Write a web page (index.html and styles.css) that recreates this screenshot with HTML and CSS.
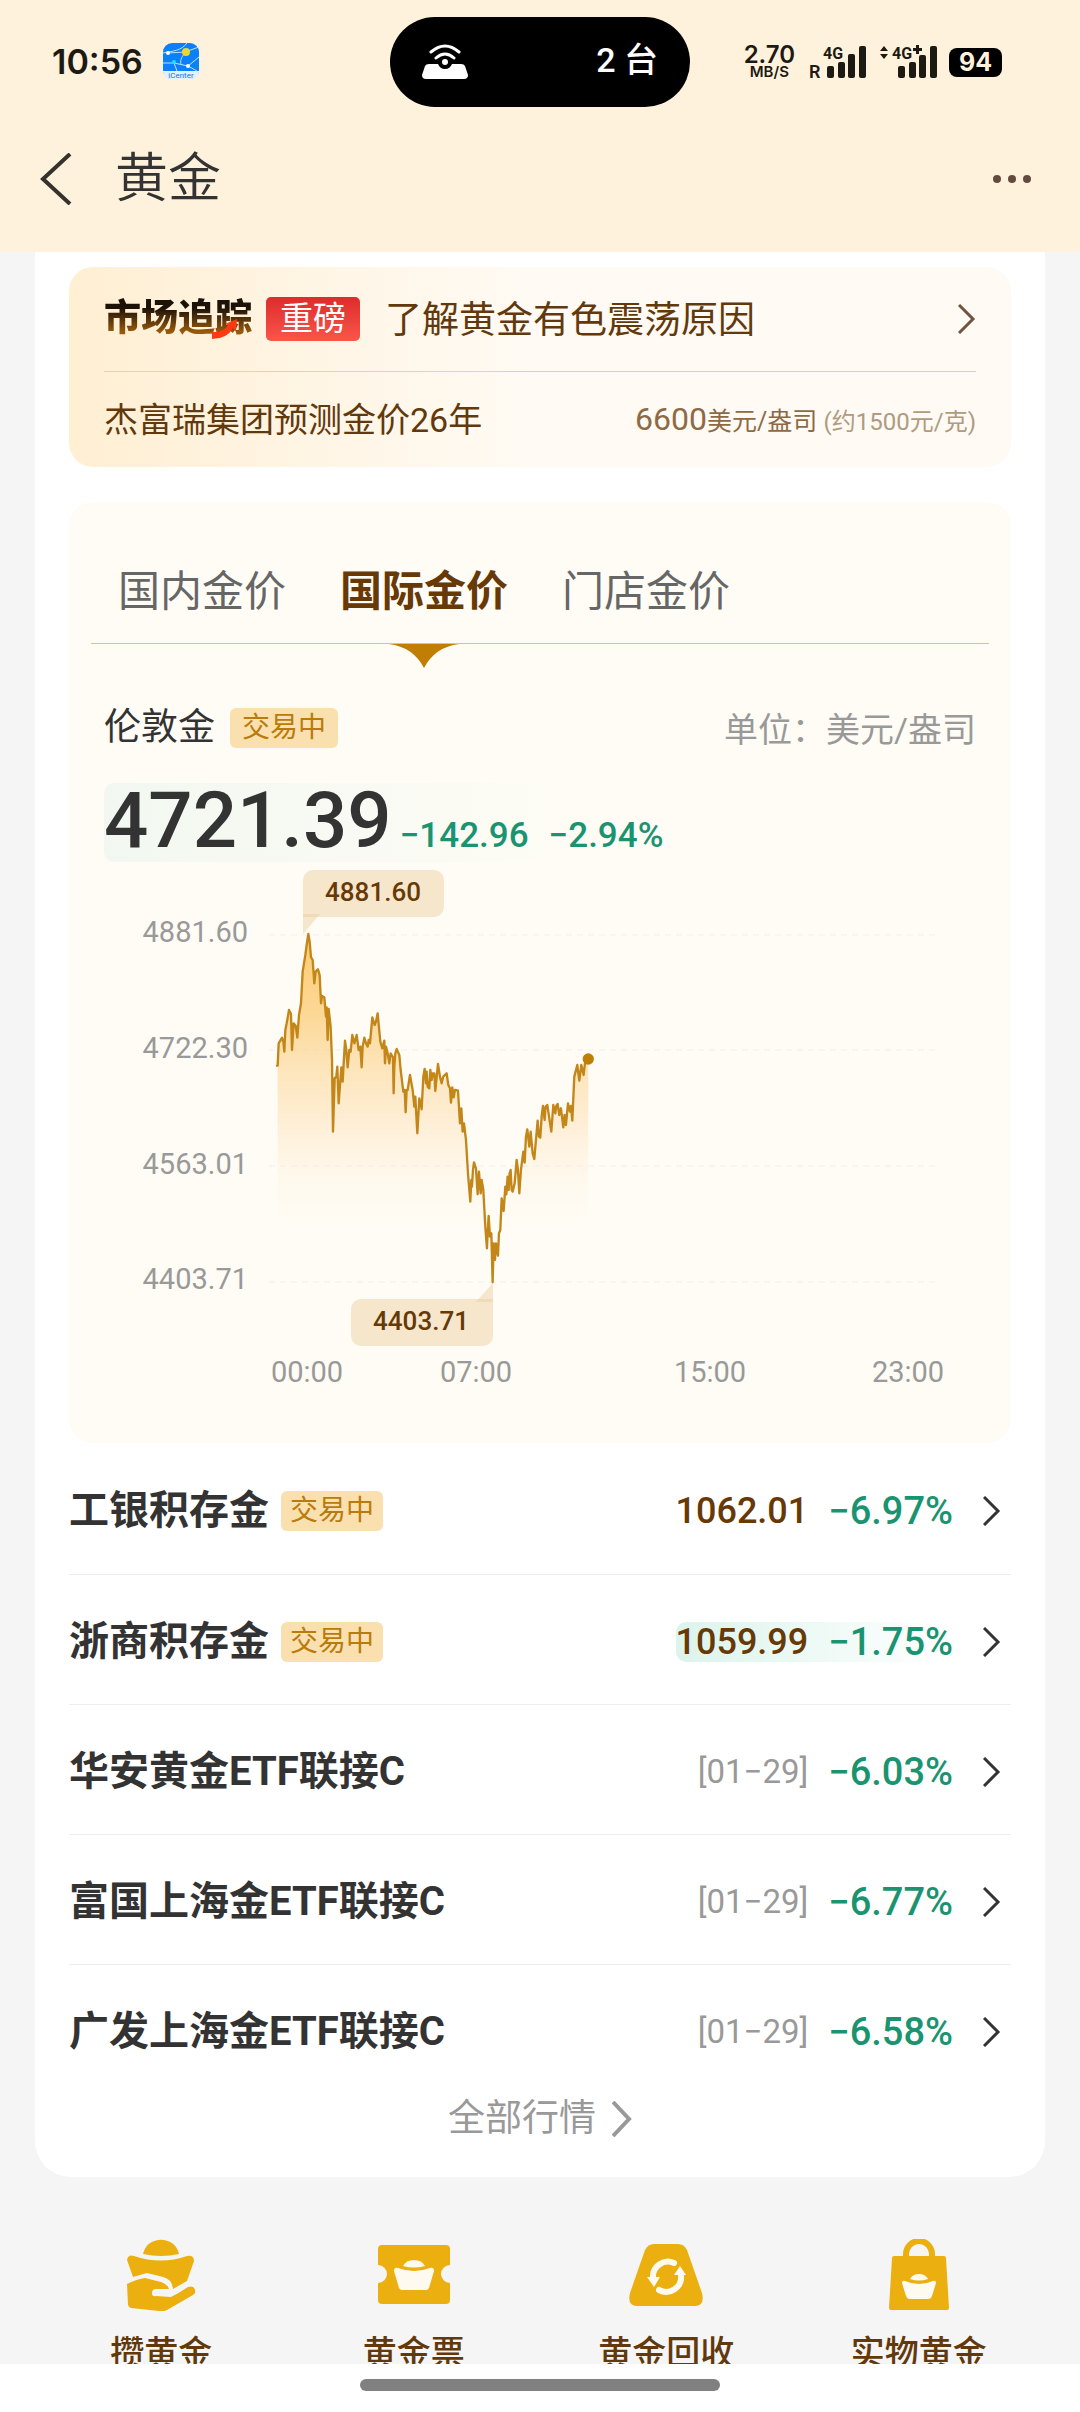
FILE: index.html
```html
<!DOCTYPE html>
<html lang="zh-CN">
<head>
<meta charset="utf-8">
<meta name="viewport" content="width=device-width, initial-scale=1">
<title>黄金</title>
<link rel="stylesheet" href="styles.css">
</head>
<body>
<header class="top">
  <div class="status">
    <div class="status-left">
      <span class="clock">10:56</span>
      <svg class="app-icon" width="36" height="38" viewBox="0 0 36 38" aria-hidden="true">
        <rect width="36" height="36" rx="9" fill="#0a80fb"/>
        <path d="M0 28H36A8 8 0 0 1 28 36H8A8 8 0 0 1 0 28Z" fill="#e2f1ff"/>
        <g fill="none" stroke="#bfe0ff" stroke-width="1"><path d="M0 10C10 8 18 8 24 0M5 10L22 9L36 4M22 10C18 14 17 19 18 21M0 20L11 20L25 23L36 14M11 20L14 28M25 23L34 28"/></g>
        <circle cx="23" cy="9" r="4" fill="#e9d92c"/><circle cx="11" cy="19" r="2" fill="#14e3f6"/><circle cx="5" cy="10" r="2" fill="#fff"/><circle cx="25" cy="23" r="2" fill="#fff"/>
        <text x="18" y="35" text-anchor="middle" class="app-name">iCenter</text>
      </svg>
    </div>
    <div class="island">
      <svg width="46" height="36" viewBox="0 0 46 36" aria-hidden="true">
        <path d="M7 20H16Q18 25 23 25T30 20H39Q42 20 43 22L46 31Q46 35 42 35H4Q0 35 0 31L3 22Q4 20 7 20Z" fill="#fff"/>
        <g fill="none" stroke="#fff" stroke-width="3" stroke-linecap="round"><path d="M9 8Q23-4 37 8M14 14Q23 6 32 14"/></g>
        <circle cx="23" cy="18" r="3" fill="#fff"/>
      </svg>
      <span>2 台</span>
    </div>
    <div class="status-right">
      <div class="speed"><b>2.70</b><span>MB/S</span></div>
      <svg width="58" height="44" viewBox="0 -5 58 44" fill="#1d1a14" aria-hidden="true">
        <text x="0" y="33" class="sig-r">R</text><text x="14" y="14" class="sig-g">4G</text>
        <rect x="18" y="21" width="7" height="12" rx="2"/><rect x="29" y="17" width="7" height="16" rx="2"/><rect x="39" y="9" width="7" height="24" rx="2"/><rect x="50" y="1" width="7" height="32" rx="2"/>
      </svg>
      <svg width="58" height="44" viewBox="0 -5 58 44" fill="#1d1a14" aria-hidden="true">
        <path d="M1 6L5 1L9 6ZM1 9H9L5 14Z"/><text x="13" y="14" class="sig-g">4G</text><path d="M34 3h3v-3h3v3h3v3h-3v3h-3v-3h-3z"/>
        <rect x="19" y="21" width="7" height="12" rx="2"/><rect x="30" y="17" width="7" height="16" rx="2"/><rect x="40" y="10" width="7" height="23" rx="2"/><rect x="51" y="1" width="7" height="32" rx="2"/>
      </svg>
      <div class="battery">94</div>
    </div>
  </div>
  <div class="nav">
    <button class="icon-btn" aria-label="返回"><svg width="32" height="52" viewBox="0 0 32 52"><path d="M30 1L3 26L30 51" fill="none" stroke="#35322d" stroke-width="4"/></svg></button>
    <h1>黄金</h1>
    <button class="icon-btn more" aria-label="更多"><svg width="40" height="10" viewBox="0 0 40 10" fill="#644a3e"><circle cx="5" cy="5" r="4"/><circle cx="20" cy="5" r="4"/><circle cx="35" cy="5" r="4"/></svg></button>
  </div>
</header>

<main class="content">
  <div class="sheet">
    <section class="news">
      <a class="news-head" href="#">
        <span class="news-logo">市场追踪<svg class="swoosh" width="26" height="20" viewBox="0 0 26 20" aria-hidden="true"><path d="M0 13Q12 14 16 6L13 5L25 0L24 12L21 9Q15 20 0 20Z" fill="#ff3a12"/></svg></span>
        <span class="hot">重磅</span>
        <span class="headline">了解黄金有色震荡原因</span>
        <svg width="18" height="30" viewBox="0 0 18 30"><path d="M1 1L15 15L1 29" fill="none" stroke="#73523f" stroke-width="3"/></svg>
      </a>
      <div class="news-row">
        <span>杰富瑞集团预测金价26年</span>
        <span class="forecast"><b>6600</b>美元/盎司 <i>(约1500元/克)</i></span>
      </div>
    </section>

    <section class="quote">
      <div class="tabs" role="tablist">
        <button role="tab" aria-selected="false">国内金价</button>
        <button role="tab" aria-selected="true" class="active">国际金价<svg class="pointer" width="70" height="24" viewBox="0 0 70 24" aria-hidden="true"><path d="M0 0H70Q46 3 35 24Q24 3 0 0Z" fill="#c07f04"/></svg></button>
        <button role="tab" aria-selected="false">门店金价</button>
      </div>
      <div class="quote-title">
        <h2>伦敦金</h2><span class="tag">交易中</span><span class="unit">单位：美元/盎司</span>
      </div>
      <div class="price"><strong>4721.39</strong><span>−142.96</span><span>−2.94%</span></div>
      <svg class="chart" viewBox="69 862 942 581" role="img" aria-label="伦敦金走势">
        <defs><linearGradient id="fill" gradientUnits="userSpaceOnUse" x1="0" y1="220" x2="0" y2="1150">
          <stop offset="0" stop-color="#fac563" stop-opacity=".9"/><stop offset=".25" stop-color="#fbcb74" stop-opacity=".75"/><stop offset=".6" stop-color="#fddcab" stop-opacity=".45"/><stop offset="1" stop-color="#fffcf5" stop-opacity="0"/></linearGradient></defs>
        <g stroke="#efefef" stroke-width="1" stroke-dasharray="6 5"><path d="M269 935H935M269 1050H935M269 1166H935M269 1282H935"/></g>
        <g class="axis" text-anchor="end"><text x="248" y="942">4881.60</text><text x="248" y="1058">4722.30</text><text x="248" y="1174">4563.01</text><text x="248" y="1289">4403.71</text></g>
        <g class="axis" text-anchor="middle"><text x="307" y="1382">00:00</text><text x="476" y="1382">07:00</text><text x="710" y="1382">15:00</text><text x="908" y="1382">23:00</text></g>
        <g transform="translate(240 860) scale(.3333)">
          <path fill="url(#fill)" d="M113 1150V617L116 550L126 533L133 575L140 490L147 450L153 462L156 570L161 490L167 497L172 533L177 465L183 430L188 335L196 285L200 255L205 222L209 245L213 292L218 300L223 370L227 335L234 328L239 345L243 430L246 408L253 412L258 470L260 442L263 540L266 447L272 500L276 600L279 815L284 655L289 650L292 620L296 730L304 622L308 665L315 542L323 622L328 570L332 575L337 525L343 550L350 525L356 570L361 560L365 622L373 533L383 560L390 550L397 472L404 495L413 460L421 545L427 565L433 542L435 610L442 575L448 590L452 580L459 592L461 700L466 580L470 567L478 585L490 695L494 690L497 757L503 690L510 645L518 690L523 740L526 710L532 820L538 715L545 748L550 650L554 627L563 680L571 630L578 680L583 640L586 693L594 612L600 650L610 670L620 640L633 728L637 682L645 690L654 692L660 790L664 745L668 815L672 790L678 840L684 940L691 1025L696 930L702 907L708 925L713 1003L717 935L730 990L736 1100L741 1165L746 1068L754 1120L758 1267L768 1150L774 1187L777 1120L781 1110L785 1015L791 1053L796 980L799 1003L806 942L809 990L812 930L818 995L830 900L838 1000L850 875L854 908L862 808L868 860L872 815L883 897L893 782L901 833L909 738L917 780L922 735L934 815L940 735L946 760L953 732L958 765L963 745L970 802L980 770L984 730L997 782L1003 650L1012 615L1018 662L1024 615L1031 645L1035 610L1045 597V1150Z"/>
          <path fill="none" stroke="#c28619" stroke-width="7" stroke-linejoin="round" stroke-linecap="round" d="M111 617H113L116 550L126 533L130 545L133 575L136 510L140 490L147 450L153 462L156 570L161 490L167 497L172 533L177 465L183 430L188 335L196 285L200 255L205 222L209 245L213 292L218 300L223 370L227 335L234 328L239 345L243 430L246 408L253 412L258 470L260 442L263 540L266 447L272 500L276 600L279 815L284 655L289 650L292 620L296 730L304 622L308 665L315 542L319 570L323 622L328 570L332 575L337 525L343 550L350 525L356 570L361 560L365 622L368 560L373 533L378 550L383 560L386 540L390 550L397 472L404 495L408 485L413 460L421 545L427 565L433 542L435 610L438 560L442 575L448 610L452 580L459 592L461 700L463 620L466 580L470 567L478 585L482 630L490 695L494 690L497 757L500 690L503 690L510 645L518 690L523 740L526 710L532 820L538 715L545 748L550 650L554 627L558 670L560 635L563 680L568 685L571 630L575 660L578 640L583 640L586 693L594 612L600 650L605 670L610 650L620 640L625 675L630 685L633 728L637 682L641 712L645 690L654 692L660 790L664 745L668 815L672 790L678 840L684 940L691 1025L694 960L696 980L699 930L702 907L708 925L713 1003L717 935L722 1000L725 960L730 990L736 1100L741 1165L743 1120L746 1068L750 1130L754 1120L758 1267L761 1150L765 1200L768 1150L774 1187L777 1120L781 1110L785 1015L791 1053L796 980L799 1003L803 950L806 990L809 940L812 930L815 990L818 995L824 970L830 900L834 930L838 1000L843 930L850 875L854 908L858 830L862 808L868 860L872 815L878 880L883 897L888 840L893 782L897 830L901 833L905 770L909 738L914 780L917 740L922 735L928 775L934 815L940 735L946 760L949 737L953 732L958 765L963 745L970 802L974 765L978 795L984 730L990 755L993 738L997 782L1003 650L1012 615L1018 662L1024 615L1031 645L1035 610L1045 597"/>
          <circle cx="1045" cy="597" r="17" fill="#c07f04"/>
        </g>
        <g fill="#ebcfa3" fill-opacity=".5"><path d="M303 880a10 10 0 0 1 10-10H434a10 10 0 0 1 10 10V907a10 10 0 0 1-10 10H303Z"/><path d="M303 914H320L303 934Z"/><path d="M351 1309a10 10 0 0 1 10-10H493V1336a10 10 0 0 1-10 10H361a10 10 0 0 1-10-10Z"/><path d="M493 1302H476L493 1283Z"/></g>
        <g class="mark" text-anchor="middle"><text x="373" y="901">4881.60</text><text x="421" y="1330">4403.71</text></g>
      </svg>
    </section>

    <ul class="list">
      <li><a href="#"><span class="name">工银积存金</span><span class="tag">交易中</span><span class="nums"><b>1062.01</b><em>−6.97%</em></span><svg class="chev" width="18" height="30" viewBox="0 0 18 30"><path d="M1 1L15 15L1 29"/></svg></a></li>
      <li><a href="#"><span class="name">浙商积存金</span><span class="tag">交易中</span><span class="nums flash"><b>1059.99</b><em>−1.75%</em></span><svg class="chev" width="18" height="30" viewBox="0 0 18 30"><path d="M1 1L15 15L1 29"/></svg></a></li>
      <li><a href="#"><span class="name">华安黄金ETF联接C</span><span class="nums"><i>[01−29]</i><em>−6.03%</em></span><svg class="chev" width="18" height="30" viewBox="0 0 18 30"><path d="M1 1L15 15L1 29"/></svg></a></li>
      <li><a href="#"><span class="name">富国上海金ETF联接C</span><span class="nums"><i>[01−29]</i><em>−6.77%</em></span><svg class="chev" width="18" height="30" viewBox="0 0 18 30"><path d="M1 1L15 15L1 29"/></svg></a></li>
      <li><a href="#"><span class="name">广发上海金ETF联接C</span><span class="nums"><i>[01−29]</i><em>−6.58%</em></span><svg class="chev" width="18" height="30" viewBox="0 0 18 30"><path d="M1 1L15 15L1 29"/></svg></a></li>
    </ul>
    <a class="all" href="#">全部行情<svg width="20" height="36" viewBox="0 0 20 36"><path d="M1 1L17 18L1 35" fill="none" stroke="#999" stroke-width="4"/></svg></a>
  </div>

  <nav class="services">
    <a href="#"><svg width="72" height="72" viewBox="0 0 72 72" fill="#ebb00f"><path d="M18 15C22-4 50-4 54 15Q36 19 18 15Z"/><path d="M2 21Q3 15 9 17Q36 26 62 17Q69 16 69 22L62 42L48 50Q47 40 38 38L22 34L8 38Z"/><path d="M2 45Q12 40 20 39L36 43Q43 46 44 50L31 50Q27 50 27 54T31 57L46 58Q54 54 63 48Q69 46 70 51Q71 54 68 56L42 71Q38 73 34 72L6 69Q4 69 3 66Z"/></svg>攒黄金</a>
    <a href="#"><svg width="72" height="72" viewBox="0 0 72 72"><path d="M4 6H68Q72 6 72 10V26A9 9 0 0 0 72 44V61Q72 65 68 65H4Q0 65 0 61V44A9 9 0 0 0 0 26V10Q0 6 4 6Z" fill="#ebb00f"/><g fill="#fffaf0"><path d="M25 27A12 10 0 0 1 47 27Q36 30 25 27Z"/><path d="M16 32Q16 28 20 29Q36 35 52 29Q56 28 56 32L51 49Q50 51 48 51H24Q22 51 21 49Z"/></g></svg>黄金票</a>
    <a href="#"><svg width="74" height="72" viewBox="0 0 74 72"><path d="M25 5H49Q55 5 58 11L73 54Q76 67 66 67H8Q-2 67 1 54L16 11Q19 5 25 5Z" fill="#ebb00f"/><path d="M45 24A15 15 0 0 0 24 39M30 51A15 15 0 0 0 52 36" fill="none" stroke="#fffaf0" stroke-width="6" stroke-linecap="round"/><path d="M18 38H31L25 48ZM45 36H57L51 27Z" fill="#fffaf0"/></svg>黄金回收</a>
    <a href="#"><svg width="72" height="72" viewBox="0 0 72 72"><path d="M23 22V15A13 13 0 0 1 49 15V22" fill="none" stroke="#ebb00f" stroke-width="6"/><path d="M11 17H61Q63 17 63 19L66 69Q66 71 64 71H8Q6 71 6 69L9 19Q9 17 11 17Z" fill="#ebb00f"/><path d="M26 17Q26 8 36 8T46 17Z" fill="#f7f5f0"/><g fill="#fffaf0"><path d="M27 40A10 9 0 0 1 45 40Q36 43 27 40Z"/><path d="M19 44Q19 41 22 42Q36 48 50 42Q53 41 53 44L49 57Q48 60 46 60H26Q24 60 23 57Z"/></g></svg>实物黄金</a>
  </nav>
</main>
<footer class="gesture"><span></span></footer>
</body>
</html>
```
FILE: styles.css
```css
* { box-sizing: border-box; }
body {
  margin: 0;
  height: 100vh;
  display: flex;
  flex-direction: column;
  background: #f5f5f5;
  color: #333;
  font-family: Roboto, "Noto Sans CJK SC", sans-serif;
}
a { color: inherit; text-decoration: none; }
button { border: 0; padding: 0; background: none; font: inherit; color: inherit; }
b, strong { font-weight: 500; }
i, em { font-style: normal; }
svg { display: block; flex: none; }
h1, h2 { margin: 0; font-weight: 400; }

/* status bar and title */
.top { background: #fff2dd; flex: none; }
.status {
  display: grid;
  grid-template-columns: 1fr 300px 1fr;
  align-items: center;
  height: 124px;
  color: #1d1a14;
}
.status-left { display: flex; align-items: center; gap: 20px; padding-left: 52px; }
.clock { font: 600 34px/40px Inter, sans-serif; }
.app-name { font: 8px Roboto, sans-serif; fill: #1777d8; }
.island {
  display: flex;
  align-items: center;
  justify-content: space-between;
  height: 90px;
  padding: 0 32px;
  border-radius: 45px;
  background: #000;
  color: #fff;
  font-size: 34px;
  line-height: 40px;
  font-weight: 500;
}
.island span { padding-bottom: 4px; }
.status-right { display: flex; align-items: center; justify-content: flex-end; gap: 12px; padding-right: 78px; }
.speed { display: flex; flex-direction: column; align-items: center; margin-right: 2px; font: 600 15px/14px Inter, sans-serif; }
.speed b { font-size: 24px; line-height: 20px; font-weight: 600; }
.sig-r { font: 600 18px Roboto, sans-serif; }
.sig-g { font: 700 16px Roboto, sans-serif; }
.battery {
  width: 53px;
  border-radius: 8px;
  background: #000;
  color: #fff2dd;
  font: 700 25px/29px Inter, sans-serif;
  text-align: center;
}
.nav { display: flex; align-items: center; height: 128px; padding: 0 48px 18px 40px; }
.nav h1 { flex: 1; margin-left: 43px; font-size: 53px; line-height: 60px; font-weight: 350; }
.icon-btn { display: block; }

/* white sheet */
.content { flex: 1; min-height: 0; overflow: hidden; }
.sheet { margin: 0 35px; padding: 15px 34px 0; background: #fff; border-radius: 0 0 36px 36px; }

.news {
  padding: 0 35px;
  border-radius: 24px;
  background: linear-gradient(90deg, #ffefd3, #fffaf3 48%);
  color: #62390c;
}
.news-head { display: flex; align-items: center; height: 105px; border-bottom: 1px solid #e0d4b2; }
.news-logo {
  position: relative;
  font-size: 37px;
  line-height: 44px;
  font-weight: 900;
  background: linear-gradient(#1c1208 25%, #9a5a0c 80%);
  background-clip: text;
  color: transparent;
}
.swoosh { position: absolute; right: 14px; bottom: 2px; }
.hot {
  margin: 0 25px 0 14px;
  padding: 0 14px;
  border-radius: 5px;
  background: linear-gradient(#dc2c2c, #fb5549);
  color: #fff;
  font-size: 33px;
  line-height: 44px;
}
.headline { flex: 1; padding-top: 4px; font-size: 37px; line-height: 44px; }
.news-row { display: flex; align-items: center; justify-content: space-between; height: 95px; font-size: 34px; line-height: 40px; }
.forecast { padding-top: 2px; color: #8d6a45; font-size: 25px; }
.forecast b { font-size: 32px; font-weight: 400; }
.forecast i { color: #b09a80; font-size: 24px; }

/* price card */
.quote { margin-top: 35px; border-radius: 24px; background: #fffcf5; overflow: hidden; }
.tabs { display: flex; gap: 54px; height: 142px; margin: 0 22px; padding: 38px 0 0 27px; border-bottom: 1px solid #d6c68e; }
.tabs button { position: relative; color: #666; font-size: 42px; line-height: 103px; }
.tabs .active { color: #663906; font-weight: 700; }
.pointer { position: absolute; left: calc(50% - 35px); top: 104px; }
.quote-title { display: flex; align-items: center; height: 60px; margin: 54px 35px 0; }
.quote-title h2 { font-size: 37px; line-height: 44px; }
.tag { margin-left: 12px; padding: 0 9px; border-radius: 6px; background: #fae0ae; color: #b87b0c; font-size: 28px; line-height: 40px; }
.quote-title .tag { margin-left: 15px; padding: 0 12px; }
.unit { margin-left: auto; padding-top: 4px; color: #999; font-size: 34px; line-height: 40px; }
.price {
  display: flex;
  align-items: baseline;
  height: 79px;
  margin: 25px 35px 0;
  border-radius: 10px;
  background: linear-gradient(90deg, #f2f8f1, #fffcf5 60%);
  color: #1a9470;
  font-size: 35px;
  font-weight: 500;
}
.price strong { color: #333; font-size: 78px; line-height: 76px; }
.price span { margin-left: 8px; }
.price span + span { margin-left: 20px; }
.chart { width: 100%; height: auto; }
.axis { fill: #999; font-size: 29px; }
.mark { fill: #663906; font-size: 26px; font-weight: 500; }

/* products */
.list { margin: 0; padding: 1px 0 0; list-style: none; }
.list li + li { border-top: 1px solid #eee; }
.list a { display: flex; align-items: center; height: 130px; padding: 4px 10px 0 0; }
.list li + li a { height: 129px; }
.name { font-size: 40px; line-height: 48px; font-weight: 700; }
.nums { display: flex; align-items: center; gap: 20px; margin-left: auto; border-radius: 10px; font-size: 36px; line-height: 40px; }
.nums b { color: #663906; }
.nums em { color: #1a9470; font-size: 38px; font-weight: 500; }
.nums i { color: #999; font-size: 33px; }
.flash { background: linear-gradient(90deg, #dcf4ec, #fff); }
.chev { margin-left: 30px; fill: none; stroke: #333; stroke-width: 3; }
.all { display: flex; align-items: center; justify-content: center; gap: 16px; height: 83px; padding-bottom: 34px; color: #999; font-size: 37px; line-height: 44px; }

.services { display: grid; grid-template-columns: repeat(4, 1fr); margin: 62px 35px 0; }
.services a { display: flex; flex-direction: column; align-items: center; gap: 18px; color: #62390c; font-size: 34px; line-height: 48px; font-weight: 500; white-space: nowrap; }

.gesture { flex: none; display: flex; align-items: center; justify-content: center; height: 48px; padding-bottom: 6px; background: #fff; }
.gesture span { width: 360px; height: 12px; border-radius: 6px; background: #808080; }
```
